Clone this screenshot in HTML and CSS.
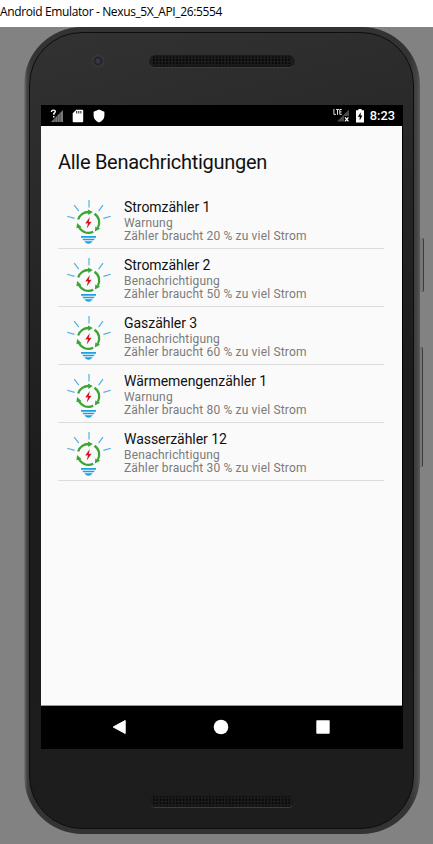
FILE: index.html
```html
<!DOCTYPE html>
<html lang="de">
<head>
<meta charset="utf-8">
<title>Android Emulator</title>
<link rel="stylesheet" href="styles.css">
</head>
<body>
<svg class="defs" aria-hidden="true">
  <symbol id="bulb" viewBox="0 0 48 48">
    <g fill="none" stroke="#4fb0e2" stroke-width="1.15">
      <path d="M24 3V10.5M9.2 8.2L13.8 14.2M38 8.2L33.6 14.2M2.2 19.3L9.6 21.4M45.8 19.3L38.4 21.4"/>
    </g>
    <g fill="none" stroke="#3da535" stroke-width="2.3">
      <path d="M13.2 22.5A10.6 10.6 0 0 1 24 15"/>
      <path d="M29.5 16.7A10.6 10.6 0 0 1 32.8 30.8"/>
      <path d="M28.2 34.8A10.6 10.6 0 0 1 13.6 29.2"/>
    </g>
    <g fill="#3da535">
      <path d="M23 12.4L27.8 15.1L23.3 18Z"/>
      <path d="M30.4 29.4L35.2 31.8L29.8 34.4Z"/>
      <path d="M12.1 26L16.4 30L11.4 31.2Z"/>
    </g>
    <path fill="#d4141c" d="M24.8 20L20.2 26.5L23 26.3L21.7 31.4L26.6 24.7L23.8 24.9Z"/>
    <g fill="#1ba0e2">
      <path d="M16 39.1H31V40.7H16ZM17.2 41.7H29.8L28.6 43.3H18.4ZM19.2 44.2H27.8Q25.5 46.8 23.5 46.8Q21.5 46.8 19.2 44.2Z"/>
    </g>
  </symbol>
  <pattern id="mesh" width="3.3" height="3.3" patternUnits="userSpaceOnUse">
    <circle cx="1.6" cy="1.6" r=".95" fill="#020202"/>
  </pattern>
</svg>

<header class="titlebar">Android Emulator - Nexus_5X_API_26:5554</header>
<main class="desk">
  <i class="key power"></i>
  <i class="key volume"></i>
  <div class="phone">
    <div class="face">
      <div class="top">
        <i class="camera"></i>
        <svg class="speaker" width="146" height="13"><rect x="4" y="1.5" width="138" height="10" fill="url(#mesh)"/></svg>
      </div>
      <div class="screen">
        <div class="status">
          <div class="left">
            <svg width="14" height="14" viewBox="0 0 14 14"><path d="M13 1V13H1Z" fill="#777"/><path d="M5 5V13M7.5 5V13M10 3V13" stroke="#333" stroke-width=".7"/><path d="M0 0H7V7H0Z" fill="#000"/><path d="M1.4 3Q1.5 1.1 3.4 1.1T5.3 2.8Q5.2 3.8 3.8 4.5V5.8M3.7 7V8.5" fill="none" stroke="#fff" stroke-width="1.4"/></svg>
            <svg width="12" height="14" viewBox="0 0 12 14"><path d="M4.3 .7H10.2Q11.2 .7 11.2 1.7V12.2Q11.2 13.3 10.2 13.3H1.7Q.7 13.3 .7 12.2V4.2Z" fill="#fff"/><path d="M4.7 2V4.5M6.8 2V4.5M8.9 2V4.5" stroke="#000" stroke-width=".9"/></svg>
            <svg width="12" height="14" viewBox="0 0 12 14"><path d="M6 .5L11.4 2.7V6.3Q11.4 11.4 6 13.5Q.6 11.4 .6 6.3V2.7Z" fill="#fff"/></svg>
          </div>
          <div class="right">
            <svg width="18" height="15" viewBox="0 0 18 15"><path d="M16 1.5V13.5H4Z" fill="#4a4a4a"/><path d="M0 0H9V8H0Z" fill="#000"/><path d="M.9 1V6.4H3M3 1.5H6M4.5 1.5V6.8M8.8 1.5H6.8V6.3H8.8M6.8 3.9H8.6" fill="none" stroke="#ddd" stroke-width="1"/><path d="M11 8H17V15H11Z" fill="#000"/><path d="M12 9.4L15.4 13.4M15.4 9.4L12 13.4" stroke="#fff" stroke-width="1.3"/></svg>
            <svg width="8" height="14" viewBox="0 0 8 14"><path d="M2.4 0H5.6V1.3H8V13.6H0V1.3H2.4Z" fill="#fff"/><path d="M4.8 3.2L1.8 7.8H3.7V11.4L6.4 6.6H4.6Z" fill="#000"/></svg>
            <span class="clock">8:23</span>
          </div>
        </div>
        <div class="app">
          <h1>Alle Benachrichtigungen</h1>
          <ul>
            <li><svg class="bulb"><use href="#bulb"/></svg><div><h2>Stromzähler 1</h2><p>Warnung</p><p>Zähler braucht 20 % zu viel Strom</p></div></li>
            <li><svg class="bulb"><use href="#bulb"/></svg><div><h2>Stromzähler 2</h2><p>Benachrichtigung</p><p>Zähler braucht 50 % zu viel Strom</p></div></li>
            <li><svg class="bulb"><use href="#bulb"/></svg><div><h2>Gaszähler 3</h2><p>Benachrichtigung</p><p>Zähler braucht 60 % zu viel Strom</p></div></li>
            <li><svg class="bulb"><use href="#bulb"/></svg><div><h2>Wärmemengenzähler 1</h2><p>Warnung</p><p>Zähler braucht 80 % zu viel Strom</p></div></li>
            <li><svg class="bulb"><use href="#bulb"/></svg><div><h2>Wasserzähler 12</h2><p>Benachrichtigung</p><p>Zähler braucht 30 % zu viel Strom</p></div></li>
          </ul>
        </div>
        <nav>
          <svg width="16" height="16" viewBox="0 0 16 16"><path d="M14.2 1.5V14.5L2.2 8Z" fill="#fff" stroke="#fff" stroke-width="1" stroke-linejoin="round"/></svg>
          <svg width="16" height="16" viewBox="0 0 16 16"><circle cx="8" cy="8" r="7.3" fill="#fff"/></svg>
          <svg width="16" height="16" viewBox="0 0 16 16"><rect x="1.3" y="1.3" width="13.4" height="13.4" rx=".8" fill="#fff"/></svg>
        </nav>
      </div>
      <div class="bottom">
        <svg class="speaker" width="146" height="13"><rect x="4" y="1.5" width="138" height="10" fill="url(#mesh)"/></svg>
      </div>
    </div>
  </div>
</main>
</body>
</html>
```
FILE: styles.css
```css
* { box-sizing: border-box; margin: 0; padding: 0; }
body { width: 433px; height: 844px; overflow: hidden; background: #fff; font-family: Roboto, sans-serif; }
svg { display: block; flex: none; }
.defs { position: absolute; width: 0; height: 0; }

.titlebar { height: 27px; padding-top: 3px; font: 12px/18px "Open Sans", sans-serif; letter-spacing: -.37px; color: #000; white-space: nowrap; }

.desk { position: relative; height: 817px; padding-left: 24px; background: #828282; }
.key { position: absolute; background: #777; border-right: 1px solid #3c3a3b; }
.power { left: 419px; top: 211px; width: 5px; height: 54px; border-radius: 0 2px 2px 0; }
.volume { left: 419px; top: 320px; width: 4px; height: 120px; border-radius: 0 2px 2px 0; }

.phone {
  position: relative; width: 396px; height: 807px; padding: 5px 6px 5px 5px; border-radius: 58px;
  background: linear-gradient(90deg, #777 0, #424242 3px, #333 8px, #333 385px, #464344 393px, #5a5758 396px);
}
.face {
  height: 797px; border-radius: 53px; border: 1px solid #0d0d0d;
  background: linear-gradient(165deg, #323233 0, #272727 25%, #1c1c1c 50%, #1d1d1d 100%);
  display: flex; flex-direction: column; padding: 0 10px 0 11px;
}
.top { height: 72px; display: flex; align-items: flex-start; padding: 21px 0 0 50px; }
.camera { width: 14px; height: 14px; border-radius: 50%; background: radial-gradient(circle, #3b3541 0 2px, #24242c 3px 4px, #373737 5px 6px, #303030 7px); }
.speaker { border-radius: 7px; background: #1b1b1b; border-bottom: 1px solid #3c3c3c; }
.top .speaker { margin: 1px 0 0 44px; }
.screen { width: 362px; height: 644px; background: #000; display: flex; flex-direction: column; }
.bottom { padding: 46px 0 0 108px; }

.status { height: 21px; display: flex; justify-content: space-between; padding: 0 8px 0 9px; }
.left, .right { display: flex; align-items: center; }
.left svg { margin-right: 8px; }
.left svg:nth-child(2) { margin-right: 9px; }
.right svg { margin-right: 6px; }
.right svg:first-child { margin-right: 5px; }
.clock { font-size: 12.8px; line-height: 21px; font-weight: 500; color: #fff; }

.app { width: 361px; height: 580px; background: #fafafa; border-bottom: 1px solid #999; padding: 24px 18px 0 17px; }
h1 { height: 41px; font-size: 20px; line-height: 24px; font-weight: 400; letter-spacing: -.28px; color: #111; white-space: nowrap; }
ul { list-style: none; }
li { height: 58px; display: flex; padding-left: 7px; border-bottom: 1px solid #dcdcdc; white-space: nowrap; }
.bulb { width: 48px; height: 48px; margin: 6px 11px 0 0; }
li div { padding-top: 7px; }
h2 { height: 19px; font-size: 14px; line-height: 18px; font-weight: 400; letter-spacing: -.04px; color: #111; }
p { font-size: 12px; line-height: 13px; letter-spacing: .16px; color: #7b7b7b; }

nav { height: 43px; display: flex; justify-content: space-between; align-items: center; padding: 0 72px 2px 70px; }
```
